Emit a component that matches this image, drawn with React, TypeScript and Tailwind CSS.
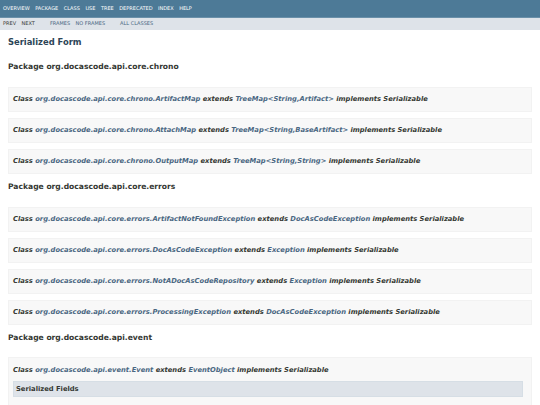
import React from 'react';

type Part = { t: string; link?: boolean };

const chrono: Part[][] = [
  [
    { t: 'Class ' },
    { t: 'org.docascode.api.core.chrono.ArtifactMap', link: true },
    { t: ' extends ' },
    { t: 'TreeMap<String,Artifact>', link: true },
    { t: ' implements Serializable' },
  ],
  [
    { t: 'Class ' },
    { t: 'org.docascode.api.core.chrono.AttachMap', link: true },
    { t: ' extends ' },
    { t: 'TreeMap<String,BaseArtifact>', link: true },
    { t: ' implements Serializable' },
  ],
  [
    { t: 'Class ' },
    { t: 'org.docascode.api.core.chrono.OutputMap', link: true },
    { t: ' extends ' },
    { t: 'TreeMap<String,String>', link: true },
    { t: ' implements Serializable' },
  ],
];

const errors: Part[][] = [
  [
    { t: 'Class ' },
    { t: 'org.docascode.api.core.errors.ArtifactNotFoundException', link: true },
    { t: ' extends ' },
    { t: 'DocAsCodeException', link: true },
    { t: ' implements Serializable' },
  ],
  [
    { t: 'Class ' },
    { t: 'org.docascode.api.core.errors.DocAsCodeException', link: true },
    { t: ' extends ' },
    { t: 'Exception', link: true },
    { t: ' implements Serializable' },
  ],
  [
    { t: 'Class ' },
    { t: 'org.docascode.api.core.errors.NotADocAsCodeRepository', link: true },
    { t: ' extends ' },
    { t: 'Exception', link: true },
    { t: ' implements Serializable' },
  ],
  [
    { t: 'Class ' },
    { t: 'org.docascode.api.core.errors.ProcessingException', link: true },
    { t: ' extends ' },
    { t: 'DocAsCodeException', link: true },
    { t: ' implements Serializable' },
  ],
];

const eventLine: Part[] = [
  { t: 'Class ' },
  { t: 'org.docascode.api.event.Event', link: true },
  { t: ' extends ' },
  { t: 'EventObject', link: true },
  { t: ' implements Serializable' },
];

const ClassLine: React.FC<{ parts: Part[] }> = ({ parts }) => (
  <h3 className="text-[6.75px] leading-[9px] font-bold italic whitespace-nowrap text-[#353833]">
    {parts.map((p, i) =>
      p.link ? (
        <a key={i} className="text-[#4A6782]">{p.t}</a>
      ) : (
        <span key={i}>{p.t}</span>
      )
    )}
  </h3>
);

const ClassBlock: React.FC<{ parts: Part[] }> = ({ parts }) => (
  <li className="h-[25px] flex items-center pl-[4px] pr-[8px] border border-[#f2f2f2] bg-[#f8f8f8]">
    <ClassLine parts={parts} />
  </li>
);

const PackageHeading: React.FC<{ name: string }> = ({ name }) => (
  <h2 className="text-[7.6px] leading-[9px] font-bold text-[#353833]">Package {name}</h2>
);

const topLinks = ['Overview', 'Package', 'Class', 'Use', 'Tree', 'Deprecated', 'Index', 'Help'];

export default function App() {
  return (
    <div className="w-[540px] h-[405px] overflow-hidden bg-white text-[#353833] font-['DejaVu_Sans',Arial,sans-serif]">
      {/* Top nav */}
      <div className="h-[18px] bg-[#4D7A97] border-b border-[#6a90a9] flex items-center pl-[3px] pt-[1px]">
        <ul className="flex gap-[5.5px] text-[5px] uppercase text-white">
          {topLinks.map((l) => (
            <li key={l}>{l}</li>
          ))}
        </ul>
      </div>

      {/* Sub nav */}
      <div className="h-[12px] bg-[#dee3e9] flex items-center pl-[3px] text-[5px] uppercase">
        <ul className="flex gap-[5.5px] text-[#353833]">
          <li>Prev</li>
          <li>Next</li>
        </ul>
        <ul className="flex gap-[5.5px] ml-[15px] text-[#4A6782]">
          <li>Frames</li>
          <li>No Frames</li>
        </ul>
        <ul className="flex ml-[15px] text-[#4A6782]">
          <li>All Classes</li>
        </ul>
      </div>

      <div className="px-[8px]">
        <h1 className="mt-[7px] text-[8.4px] leading-[10px] font-bold text-[#2c4557]">Serialized Form</h1>

        <div className="mt-[15px]">
          <PackageHeading name="org.docascode.api.core.chrono" />
          <ul className="mt-[16px] flex flex-col gap-[6px]">
            {chrono.map((c, i) => (
              <ClassBlock key={i} parts={c} />
            ))}
          </ul>
        </div>

        <div className="mt-[8px]">
          <PackageHeading name="org.docascode.api.core.errors" />
          <ul className="mt-[16px] flex flex-col gap-[6px]">
            {errors.map((c, i) => (
              <ClassBlock key={i} parts={c} />
            ))}
          </ul>
        </div>

        <div className="mt-[8px]">
          <PackageHeading name="org.docascode.api.event" />
          <ul className="mt-[15px]">
            <li className="pl-[4px] pr-[8px] pt-[8px] border border-[#f2f2f2] bg-[#f8f8f8] h-[80px]">
              <ClassLine parts={eventLine} />
              <h3 className="mt-[6px] h-[16px] flex items-center px-[2px] bg-[#dee3e9] border border-[#d6dee5] text-[6.75px] font-bold text-[#353833]">
                Serialized Fields
              </h3>
            </li>
          </ul>
        </div>
      </div>
    </div>
  );
}
